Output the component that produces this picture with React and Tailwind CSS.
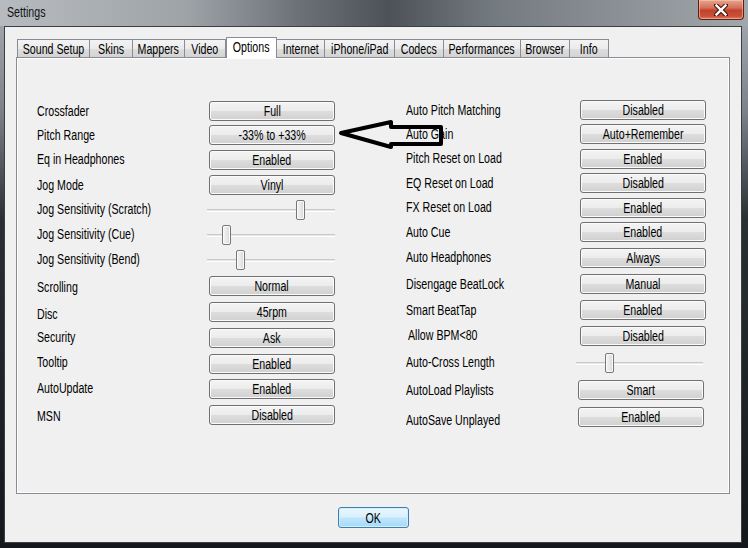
import React from "react";

const tabs = [
  { name: "Sound Setup", w: "w-[73px]" },
  { name: "Skins", w: "w-[44px]" },
  { name: "Mappers", w: "w-[53px]" },
  { name: "Video", w: "w-[42px]" },
  { name: "Options", w: "w-[51px]", active: true },
  { name: "Internet", w: "w-[49px]" },
  { name: "iPhone/iPad", w: "w-[71px]" },
  { name: "Codecs", w: "w-[50px]" },
  { name: "Performances", w: "w-[78px]" },
  { name: "Browser", w: "w-[50px]" },
  { name: "Info", w: "w-[40px]" },
];

const leftRows = [
  { label: "Crossfader", h: "h-[24px]", btn: "Full" },
  { label: "Pitch Range", h: "h-[24px]", btn: "-33% to +33%" },
  { label: "Eq in Headphones", h: "h-[25px]", btn: "Enabled" },
  { label: "Jog Mode", h: "h-[25px]", btn: "Vinyl", lc: "translate-y-[1px]" },
  { label: "Jog Sensitivity (Scratch)", h: "h-[25px]", slider: 89 },
  { label: "Jog Sensitivity (Cue)", h: "h-[25px]", slider: 15 },
  { label: "Jog Sensitivity (Bend)", h: "h-[25px]", slider: 29 },
  { label: "Scrolling", h: "h-[27px]", btn: "Normal", lc: "translate-y-[2px]" },
  { label: "Disc", h: "h-[26px]", btn: "45rpm", lc: "translate-y-[2px]" },
  { label: "Security", h: "h-[26px]", btn: "Ask", lc: "-translate-y-[1px]" },
  { label: "Tooltip", h: "h-[25px]", btn: "Enabled", lc: "-translate-y-[1px]" },
  { label: "AutoUpdate", h: "h-[26px]", btn: "Enabled", lc: "-translate-y-[1px]" },
  { label: "MSN", h: "h-[26px]", btn: "Disabled", lc: "translate-y-[1px]" },
];

const rightRows = [
  { label: "Auto Pitch Matching", h: "h-[24px]", btn: "Disabled" },
  { label: "Auto Gain", h: "h-[24px]", btn: "Auto+Remember" },
  { label: "Pitch Reset on Load", h: "h-[25px]", btn: "Enabled" },
  { label: "EQ Reset on Load", h: "h-[24px]", btn: "Disabled" },
  { label: "FX Reset on Load", h: "h-[25px]", btn: "Enabled" },
  { label: "Auto Cue", h: "h-[24px]", btn: "Enabled" },
  { label: "Auto Headphones", h: "h-[27px]", btn: "Always" },
  { label: "Disengage BeatLock", h: "h-[26px]", btn: "Manual" },
  { label: "Smart BeatTap", h: "h-[26px]", btn: "Enabled" },
  { label: "Allow BPM<80", h: "h-[26px]", btn: "Disabled", lc: "pl-[2px] -translate-y-[1px]" },
  { label: "Auto-Cross Length", h: "h-[27px]", slider: 29, sc: "-ml-[4px] w-[127px]" },
  { label: "AutoLoad Playlists", h: "h-[28px]", btn: "Smart", bc: "-ml-[2px]" },
  { label: "AutoSave Unplayed", h: "h-[26px]", btn: "Enabled", bc: "-ml-[2px]", lc: "translate-y-[3px]" },
];

// the dialog font is narrow and tall, so squeeze Arial-metric text horizontally
function Narrow({ children, left }) {
  return (
    <span className={"inline-block whitespace-nowrap scale-x-[0.76] " + (left ? "origin-left" : "origin-center")}>
      {children}
    </span>
  );
}

function WinButton({ children, className = "" }) {
  return (
    <div
      className={
        "flex h-[20px] w-[126px] items-center justify-center rounded-[3px] border border-[#707070] bg-[linear-gradient(to_bottom,#f4f4f4_0%,#ececec_48%,#dddddd_52%,#d0d0d0_100%)] shadow-[inset_0_0_0_1px_#fbfbfb] leading-none text-black " +
        className
      }
    >
      <Narrow>{children}</Narrow>
    </div>
  );
}

function Slider({ pos, className = "-ml-[2px] w-[128px]" }) {
  return (
    <div className={"relative h-[20px] " + className}>
      <div className="absolute left-0 right-0 top-[9px] h-[2px] border-t border-[#c9c9c9] bg-[#e7e7e7] shadow-[0_1px_0_#ffffff]" />
      <div
        className="absolute top-0 h-[20px] w-[9px] rounded-[2px] border border-[#777777] bg-[linear-gradient(to_right,#f4f4f4_0%,#e8e8e8_50%,#d6d6d6_100%)] shadow-[inset_0_0_0_1px_#fafafa]"
        style={{ left: pos }}
      />
    </div>
  );
}

function Row({ row, labelW }) {
  return (
    <div className={"flex items-center " + row.h}>
      <div className={"shrink-0 " + labelW + " " + (row.lc || "")}>
        <Narrow left>{row.label}</Narrow>
      </div>
      {row.btn ? (
        <WinButton className={row.bc || ""}>{row.btn}</WinButton>
      ) : (
        <Slider pos={row.slider} className={row.sc} />
      )}
    </div>
  );
}

export default function App() {
  return (
    <div className="flex h-[548px] w-[748px] flex-col overflow-hidden bg-[linear-gradient(to_bottom,#a9aeb3_0%,#7d8389_20%,#2a2f34_40%,#14181c_100%)] font-['Liberation_Sans',Arial,sans-serif] text-[14px] text-black">
      {/* title bar */}
      <div className="flex h-[26px] shrink-0 items-start justify-between bg-[linear-gradient(90deg,#b7bbbf_0%,#9ea3a8_25%,#6b7177_40%,#4c5258_52%,#737a80_66%,#8e9399_85%,#a2a7ab_100%)]">
        <div className="pl-[7px] pt-[4px] leading-[16px] text-[#111]">
          <Narrow left>Settings</Narrow>
        </div>
        <div className="mr-[4px] flex h-[20px] w-[46px] items-center justify-center rounded-b-[4px] border border-t-0 border-[#5c2114] bg-[linear-gradient(to_bottom,#e9a48f_0%,#d4715a_40%,#c2432a_55%,#c9503a_85%,#e07b5f_100%)] shadow-[inset_0_0_0_1px_rgba(255,210,190,0.5)]">
          <svg width="14" height="12" viewBox="0 0 14 12">
            <path d="M2 1 L12 11 M12 1 L2 11" stroke="#4a1a10" strokeWidth="4.5" strokeLinecap="square" />
            <path d="M2.5 1.5 L11.5 10.5 M11.5 1.5 L2.5 10.5" stroke="#ffffff" strokeWidth="2.4" strokeLinecap="square" />
          </svg>
        </div>
      </div>

      {/* client area */}
      <div className="mb-[5px] ml-[4px] mr-[6px] flex flex-1 flex-col border border-[#3a3f44] bg-[#f0f0f0]">
        {/* tabs */}
        <div className="relative z-10 -mb-px ml-[12px] mt-[10px] flex h-[21px] items-end">
          {tabs.map((t) =>
            t.active ? (
              <div
                key={t.name}
                className={"relative z-10 flex h-[21px] items-start justify-center border border-b-0 border-[#898c95] bg-white pt-[2px] leading-[15px] " + t.w}
              >
                <Narrow>{t.name}</Narrow>
              </div>
            ) : (
              <div
                key={t.name}
                className={"-ml-px flex h-[19px] items-center justify-center border border-[#898c95] bg-[linear-gradient(to_bottom,#f3f3f3_0%,#ebebeb_50%,#dedede_51%,#d3d3d3_100%)] leading-none first:ml-0 " + t.w}
              >
                <Narrow>{t.name}</Narrow>
              </div>
            )
          )}
        </div>

        {/* panel */}
        <div className="relative ml-[11px] flex h-[437px] w-[714px] border border-[#898c95] bg-[#f0f0f0] shadow-[inset_0_0_0_1px_#ffffff]">
          <div className="flex flex-col pl-[20px] pt-[41px]">
            {leftRows.map((r) => (
              <Row key={r.label} row={r} labelW="w-[172px]" />
            ))}
          </div>
          <div className="ml-[71px] flex flex-col pt-[40px]">
            {rightRows.map((r) => (
              <Row key={r.label} row={r} labelW="w-[174px]" />
            ))}
          </div>

          {/* hand drawn arrow */}
          <svg className="absolute left-[320px] top-[60px]" width="110" height="34" viewBox="0 0 110 34">
            <path
              d="M4 15 L54 4 L54 9 L104 9 L104 26 L54 26 L54 29 Z"
              fill="none"
              stroke="#000000"
              strokeWidth="4"
              strokeLinejoin="round"
            />
          </svg>
        </div>

        {/* OK */}
        <div className="mt-[13px] flex justify-center">
          <div className="flex h-[21px] w-[71px] items-center justify-center rounded-[3px] border border-[#3c7fb1] bg-[linear-gradient(to_bottom,#eaf6fd_0%,#d9f0fc_48%,#bee6fd_52%,#a7d9f5_100%)] shadow-[inset_0_0_0_1px_#d4eefb] leading-none">
            <Narrow>OK</Narrow>
          </div>
        </div>
      </div>
    </div>
  );
}
